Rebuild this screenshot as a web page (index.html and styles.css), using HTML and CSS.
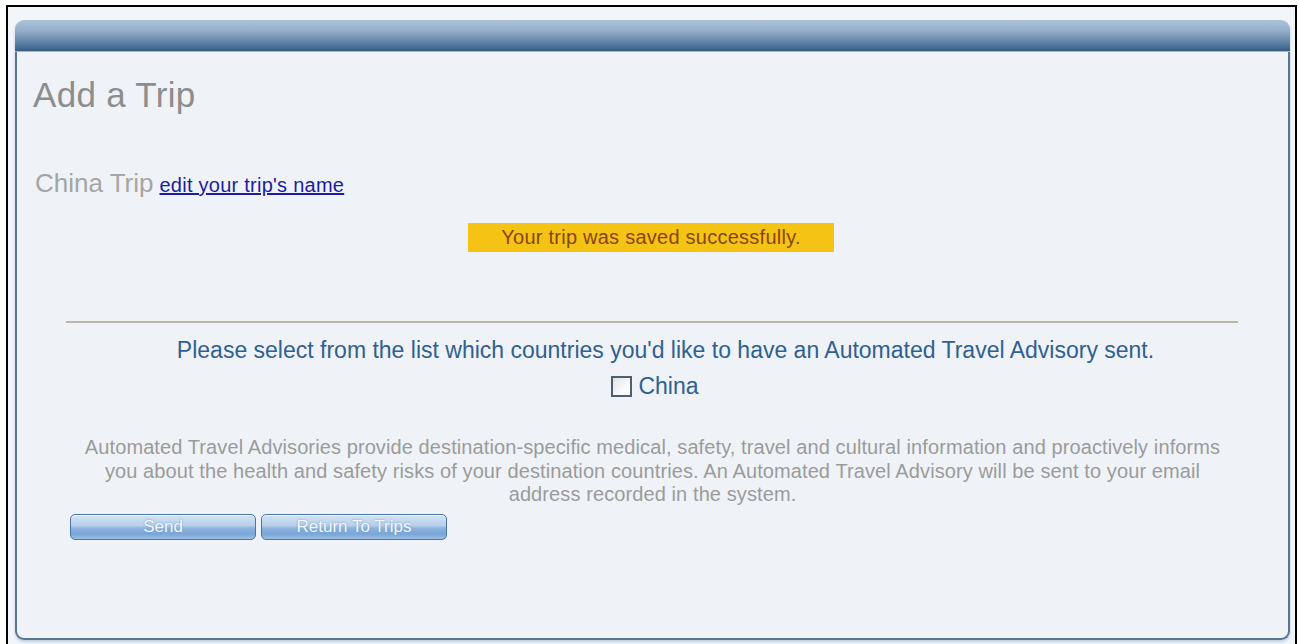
FILE: index.html
```html
<!DOCTYPE html>
<html lang="en">
<head>
<meta charset="utf-8">
<title>Add a Trip</title>
<link rel="stylesheet" href="styles.css">
</head>
<body>
<div class="frame">
  <div class="panel">
    <div class="panel-head"></div>
    <div class="panel-body">
      <h1 class="page-title">Add a Trip</h1>
      <div class="trip-name">
        <span class="trip-label">China Trip</span>
        <a class="trip-edit" href="#">edit your trip's name</a>
      </div>
      <div class="notice-row">
        <div class="notice">Your trip was saved successfully.</div>
      </div>
      <hr class="divider">
      <p class="prompt">Please select from the list which countries you'd like to have an Automated Travel Advisory sent.</p>
      <label class="country">
        <input type="checkbox" class="check">
        <span>China</span>
      </label>
      <p class="info">Automated Travel Advisories provide destination-specific medical, safety, travel and cultural information and proactively informs you about the health and safety risks of your destination countries. An Automated Travel Advisory will be sent to your email address recorded in the system.</p>
      <div class="actions">
        <button class="btn" type="button">Send</button>
        <button class="btn" type="button">Return To Trips</button>
      </div>
    </div>
  </div>
</div>
</body>
</html>
```

FILE: styles.css
```css
html, body {
  margin: 0;
  padding: 0;
  background: #ffffff;
  overflow: hidden;
  height: 644px;
}

body {
  font-family: "Liberation Sans", Arial, sans-serif;
}

.frame {
  box-sizing: border-box;
  margin: 5px 0 0 6px;
  width: 1291px;
  height: 639px;
  border: 2px solid #000000;
  border-bottom: none;
  background: #f3f6f9;
  padding: 13px 5px 0 7px;
}

.panel {
  width: 1275px;
  border-radius: 9px;
  box-shadow: 0 2px 3px rgba(120, 160, 200, 0.45);
}

.panel-head {
  height: 32px;
  border-radius: 9px 9px 0 0;
  background: linear-gradient(#adc3d9 0%, #93aec9 35%, #6286a8 70%, #355d82 100%);
  border-bottom: 1px solid #9fb6cc;
  box-sizing: border-box;
}

.panel-body {
  box-sizing: border-box;
  height: 588px;
  background: #eff3f7;
  border: 2px solid #5a7592;
  border-top: none;
  border-radius: 0 0 9px 9px;
  padding: 23px 16px 0 16px;
}

.page-title {
  margin: 0;
  font-weight: normal;
  font-size: 35px;
  line-height: 40px;
  letter-spacing: 0.3px;
  color: #8d8d8d;
}

.trip-name {
  margin-top: 53px;
  display: flex;
  align-items: baseline;
  gap: 6px;
  line-height: 30px;
  padding-left: 2px;
}

.trip-label {
  font-size: 26px;
  color: #a5a5a5;
}

.trip-edit {
  font-size: 20px;
  letter-spacing: 0.25px;
  color: #1d1da0;
  text-decoration: underline;
}

.notice-row {
  margin-top: 23px;
  display: flex;
  justify-content: center;
}

.notice {
  box-sizing: border-box;
  width: 366px;
  height: 29px;
  margin-left: -3px;
  background: #f5c313;
  color: #87460f;
  font-size: 20px;
  letter-spacing: 0.25px;
  line-height: 29px;
  text-align: center;
}

.divider {
  margin: 69px 34px 0 33px;
  border: none;
  border-top: 2px solid #bcb5a8;
  height: 0;
}

.prompt {
  margin: 13px 0 0;
  padding-left: 26px;
  text-align: center;
  font-size: 23px;
  line-height: 28px;
  color: #2f6092;
}

.country {
  margin-top: 9px;
  padding-left: 5px;
  display: flex;
  justify-content: center;
  align-items: center;
  gap: 6px;
  font-size: 23px;
  line-height: 26px;
  color: #2f6092;
}

.check {
  appearance: none;
  -webkit-appearance: none;
  margin: 0;
  width: 21px;
  height: 21px;
  box-sizing: border-box;
  border: 2px solid #4e5f70;
  background: linear-gradient(135deg, #dfe3e8 0%, #f8f9fb 60%, #ffffff 100%);
}

.info {
  margin: 37px auto 0;
  width: 1150px;
  text-align: center;
  font-size: 20px;
  letter-spacing: 0.1px;
  line-height: 23.5px;
  color: #9b9b9b;
}

.actions {
  margin-top: 7px;
  padding-left: 37px;
  display: flex;
  gap: 5px;
}

.btn {
  box-sizing: border-box;
  width: 186px;
  height: 26px;
  padding: 0;
  border: 1px solid #4a77ab;
  border-radius: 5px;
  background: linear-gradient(#d3e3f4 0%, #b6cfea 45%, #8cb2de 55%, #7aa6d8 80%, #9cc0e6 100%);
  color: #f3f7fc;
  font-family: "Liberation Sans", Arial, sans-serif;
  font-size: 17px;
  line-height: 24px;
  text-shadow: 0 0 2px #6b93c2;
  box-shadow: inset 0 1px 0 #eef5fc;
}
```
